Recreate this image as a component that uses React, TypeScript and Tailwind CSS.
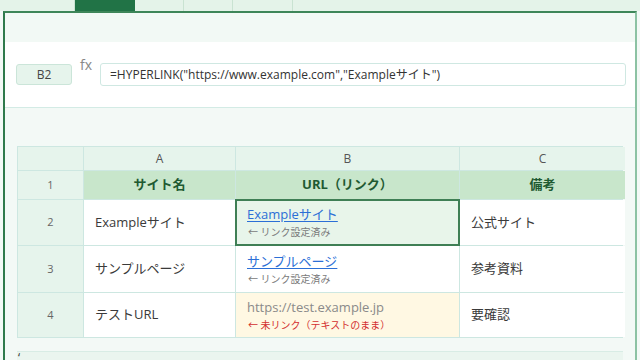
const font = { fontFamily: '"Open Sans", "Noto Sans CJK JP", sans-serif' }

const tabs = [
    { label: "ファイル", w: "w-[75px]", active: false },
    { label: "ホーム", w: "w-[60px]", active: true },
    { label: "挿入", w: "w-[49px]", active: false },
    { label: "数式", w: "w-[49px]", active: false },
    { label: "データ", w: "w-[60px]", active: false },
]

function HeaderCell({ children }: { children?: React.ReactNode }) {
    return (
        <div className="flex items-center justify-center bg-[#e6f4ec] text-[12px] text-[#555]">
            {children}
        </div>
    )
}

function RowNum({ n }: { n: number }) {
    return (
        <div className="flex items-center justify-center bg-[#e6f4ec] text-[11px] text-[#666]">
            {n}
        </div>
    )
}

function Cell({ children }: { children?: React.ReactNode }) {
    return (
        <div className="flex items-center bg-white px-[11px] text-[13px] text-[#3a3a3a]">
            {children}
        </div>
    )
}

function LinkCell({ text, selected }: { text: string; selected?: boolean }) {
    return (
        <div
            className={
                selected
                    ? "flex flex-col justify-center -m-px border-2 border-[#3f7f55] bg-[#e8f5ea] px-[10px] pb-[1px]"
                    : "flex flex-col justify-center bg-white px-[11px]"
            }
        >
            <span className="text-[13px] leading-[18px] text-[#2b6fd6] underline underline-offset-2">{text}</span>
            <span className="mt-[3px] pl-[1px] text-[10px] leading-[13px] text-[#7a7a7a]">← リンク設定済み</span>
        </div>
    )
}

export default function App() {
    return (
        <div className="h-[360px] w-[640px] overflow-hidden bg-[#f3f9f6]" style={font}>
            {/* ribbon tabs, scrolled partly out of view */}
            <div className="flex h-[11px] items-end overflow-hidden bg-[#e4f3e9]">
                {tabs.map((t) => (
                    <div
                        key={t.label}
                        className={
                            t.active
                                ? `${t.w} flex h-[26px] shrink-0 items-start justify-center bg-[#217346] text-[12px] leading-[13px] text-white`
                                : `${t.w} flex h-[26px] shrink-0 items-start justify-center border-r border-[#c9e3d2] text-[12px] leading-[13px] text-[#777]`
                        }
                    >
                        {t.label}
                    </div>
                ))}
            </div>

            <div className="mx-[3px] flex h-[349px] flex-col border-l-2 border-r-2 border-t-2 border-l-[#2f7a4c] border-r-[#8cc2a3] border-t-[#3e8659]">
                <div className="h-[29px] shrink-0 bg-[#f2f9f5]" />

                {/* formula bar */}
                <div className="flex h-[66px] shrink-0 items-center border-b border-[#d3ebe5] bg-white pl-[11px] pr-[9px]">
                    <div className="flex h-[21px] w-[56px] items-center justify-center rounded-[3px] border border-[#cbe5d9] bg-[#e6f4ec] text-[12px] text-[#444]">
                        B2
                    </div>
                    <span className="mb-[20px] ml-[8px] w-[20px] text-[14px] text-[#888]">fx</span>
                    <div className="flex h-[23px] flex-1 items-center rounded-[3px] border border-[#cfe8e2] bg-white px-[9px] text-[12px] text-[#333]">
                        =HYPERLINK("https://www.example.com","Exampleサイト")
                    </div>
                </div>

                {/* sheet */}
                <div className="flex flex-1 flex-col bg-[#f3f9f6] px-[12px] pt-[38px]">
                    <div className="grid grid-cols-[65px_151px_223px_165px] grid-rows-[23px_28px_45px_46px_44px] gap-px border border-[#cde7e1] bg-[#cde7e1]">
                        <HeaderCell />
                        <HeaderCell>A</HeaderCell>
                        <HeaderCell>B</HeaderCell>
                        <HeaderCell>C</HeaderCell>

                        <RowNum n={1} />
                        <div className="flex items-center justify-center bg-[#c8e6cb] text-[13px] font-bold text-[#1f5a32]">サイト名</div>
                        <div className="flex items-center justify-center bg-[#c8e6cb] text-[13px] font-bold text-[#1f5a32]">URL（リンク）</div>
                        <div className="flex items-center justify-center bg-[#c8e6cb] text-[13px] font-bold text-[#1f5a32]">備考</div>

                        <RowNum n={2} />
                        <Cell>Exampleサイト</Cell>
                        <LinkCell text="Exampleサイト" selected />
                        <Cell>公式サイト</Cell>

                        <RowNum n={3} />
                        <Cell>サンプルページ</Cell>
                        <LinkCell text="サンプルページ" />
                        <Cell>参考資料</Cell>

                        <RowNum n={4} />
                        <Cell>テストURL</Cell>
                        <div className="flex flex-col justify-center bg-[#fff8e3] px-[11px]">
                            <span className="text-[13px] leading-[18px] text-[#8a8a8a]">https://test.example.jp</span>
                            <span className="mt-[3px] pl-[1px] text-[10px] leading-[13px] text-[#d32f2f]">← 未リンク（テキストのまま）</span>
                        </div>
                        <Cell>要確認</Cell>
                    </div>

                    <div className="mt-[13px] h-[20px] border-t border-[#d8ece5] bg-[#eaf5ef] pl-[1px] text-[12px] leading-[12px] text-[#333]">
                        ‘
                    </div>
                </div>
            </div>
        </div>
    )
}
